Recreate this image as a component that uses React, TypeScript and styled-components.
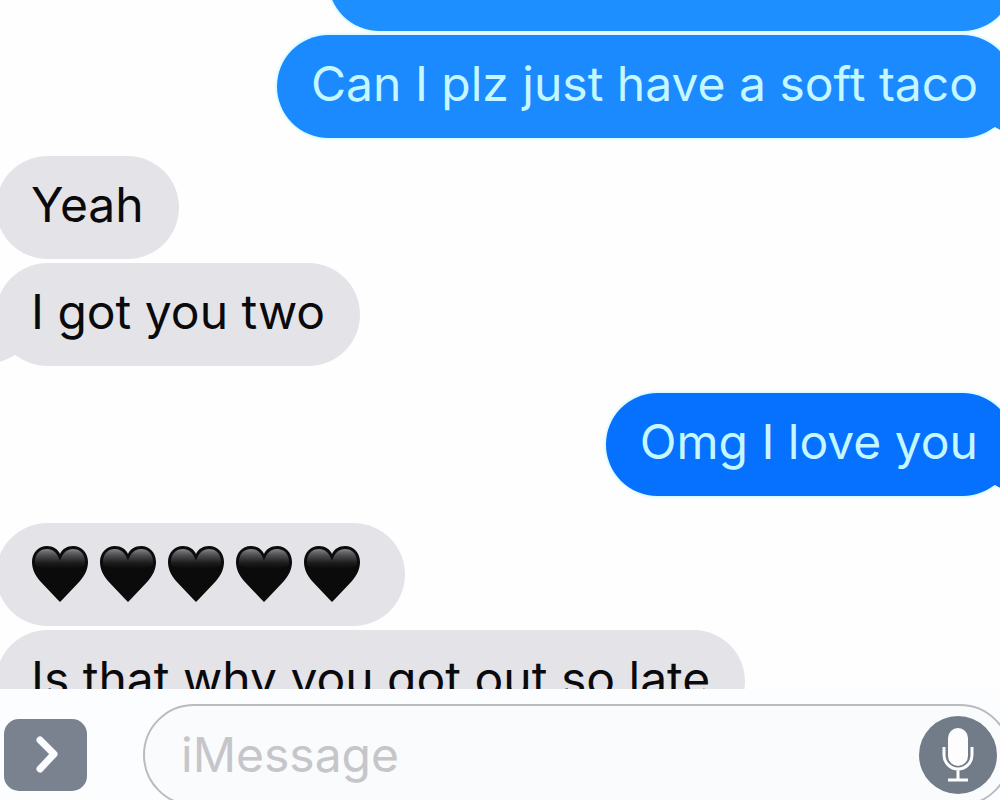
import React from "react";
import styled, { createGlobalStyle, css } from "styled-components";

type Side = "sent" | "received";

const GlobalStyle = createGlobalStyle`
  *, *::before, *::after { box-sizing: border-box; }
  body {
    margin: 0;
    background: #fefefe;
    font-family: Inter, "Liberation Sans", sans-serif;
  }
`;

const Screen = styled.main`
  display: flex;
  flex-direction: column;
  height: 100vh;
  overflow: hidden;
`;

const Thread = styled.section`
  flex: 1;
  min-height: 0;
  overflow: hidden;
`;

const Messages = styled.ol`
  display: flex;
  flex-direction: column;
  gap: 4px;
  list-style: none;
  margin: -72px -14px 0 -4px;
  padding: 0;
`;

const Bubble = styled.li<{ $side: Side; $tone?: string; $gap?: number }>`
  position: relative;
  display: flex;
  align-items: center;
  height: 103px;
  border-radius: 52px;
  font-size: 48px;
  font-weight: 400;
  line-height: 60px;
  white-space: nowrap;
  margin-top: ${(p) => p.$gap ?? 0}px;
  ${(p) =>
    p.$side === "sent"
      ? css`
          align-self: flex-end;
          padding: 0 36px 6px 34px;
          background: ${p.$tone};
          color: #c4f7ff;
          box-shadow: 0 0 3px 1px #c4f7ff;
        `
      : css`
          align-self: flex-start;
          padding: 0 35px 6px 35px;
          background: #e4e3e8;
          color: #0a0a0c;
        `}
`;

const EarlierBubble = styled(Bubble)`
  min-width: 686px;
`;

const TailShape = styled.svg<{ $side: Side }>`
  position: absolute;
  bottom: 0;
  width: 40px;
  height: 40px;
  ${(p) => (p.$side === "sent" ? "right: -8px; transform: scaleX(-1);" : "left: -8px;")}
`;

const Hearts = styled.span`
  display: flex;
  gap: 12px;
  padding: 4px 10px 0 1px;
`;

const HeartShape = styled.svg`
  width: 56px;
  height: 56px;
`;

const Composer = styled.form`
  display: flex;
  flex: none;
  align-items: flex-start;
  gap: 56px;
  height: 111px;
  padding: 15px 0 0 4px;
  margin-right: -11px;
  background: #fcfdfe;
`;

const ExpandButton = styled.button`
  display: grid;
  place-items: center;
  flex: none;
  width: 83px;
  height: 72px;
  margin-top: 15px;
  padding: 0;
  border: 0;
  border-radius: 15px;
  background: #7a818f;
`;

const Field = styled.div`
  display: flex;
  flex: 1;
  align-items: center;
  height: 102px;
  min-width: 0;
  padding: 0 12px 0 36px;
  border: 2px solid #b9bbc0;
  border-radius: 51px;
  background: #fafbfc;
`;

const MessageInput = styled.input`
  flex: 1;
  min-width: 0;
  height: 60px;
  padding: 0;
  border: 0;
  outline: 0;
  background: transparent;
  color: #0a0a0c;
  font: 400 48px/60px Inter, "Liberation Sans", sans-serif;
  &::placeholder {
    color: #c6c6ca;
    opacity: 1;
  }
`;

const MicButton = styled.button`
  flex: none;
  width: 78px;
  height: 78px;
  padding: 0;
  border: 0;
  border-radius: 50%;
  background: #727c89;
`;

function Tail({ side, color }: { side: Side; color: string }) {
  return (
    <TailShape $side={side} viewBox="0 0 40 40" aria-hidden="true">
      <path d="M12 0 C12 18 10 30 0 38 C10 37 19 34 27 29 L40 34 V0 Z" fill={color} />
    </TailShape>
  );
}

function Heart() {
  return (
    <HeartShape viewBox="0 0 56 56" aria-hidden="true">
      <defs>
        <linearGradient id="gloss" x1="0" y1="0" x2="0" y2="1">
          <stop offset="0" stopColor="#858588" />
          <stop offset="0.3" stopColor="#505053" />
          <stop offset="0.7" stopColor="#1c1c1e" />
          <stop offset="1" stopColor="#0b0b0c" />
        </linearGradient>
      </defs>
      <path
        d="M28 56 C27 55 26 54 25 53 L8 35 C3 29 0 23 0 16 C0 7 6 0 15 0 C21 0 26 3 28 8 C30 3 35 0 41 0 C50 0 56 7 56 16 C56 23 53 29 48 35 L31 53 C30 54 29 55 28 56 Z"
        fill="#0b0b0c"
      />
      <path
        d="M3 19 C2 9 7 3 15 3 C22 3 26 8 28 15 C30 8 34 3 41 3 C49 3 54 9 53 19 C49 24 7 24 3 19 Z"
        fill="url(#gloss)"
      />
    </HeartShape>
  );
}

export default function App() {
  return (
    <Screen>
      <GlobalStyle />
      <Thread aria-label="Conversation">
        <Messages>
          <EarlierBubble $side="sent" $tone="#1e8fff" />
          <Bubble $side="sent" $tone="#1c8aff">
            Can I plz just have a soft taco
            <Tail side="sent" color="#1c8aff" />
          </Bubble>
          <Bubble $side="received" $gap={14}>
            Yeah
          </Bubble>
          <Bubble $side="received">
            I got you two
            <Tail side="received" color="#e4e3e8" />
          </Bubble>
          <Bubble $side="sent" $tone="#0670ff" $gap={23}>
            Omg I love you
            <Tail side="sent" color="#0670ff" />
          </Bubble>
          <Bubble $side="received" $gap={23}>
            <Hearts role="img" aria-label="Five black hearts">
              {[0, 1, 2, 3, 4].map((n) => (
                <Heart key={n} />
              ))}
            </Hearts>
          </Bubble>
          <Bubble $side="received">Is that why you got out so late</Bubble>
        </Messages>
      </Thread>
      <Composer onSubmit={(e) => e.preventDefault()}>
        <ExpandButton type="button" aria-label="Show apps">
          <svg width="26" height="40" viewBox="0 0 26 40" fill="none" aria-hidden="true">
            <path
              d="M7 5 L21 19 L7 34"
              stroke="#fafcff"
              strokeWidth="7"
              strokeLinecap="round"
              strokeLinejoin="round"
            />
          </svg>
        </ExpandButton>
        <Field>
          <MessageInput type="text" placeholder="iMessage" aria-label="iMessage" />
          <MicButton type="button" aria-label="Dictate">
            <svg width="78" height="78" viewBox="0 0 78 78" fill="none" aria-hidden="true">
              <rect x="29" y="12" width="20" height="38" rx="10" fill="#fdfdfe" />
              <path
                d="M25 31 V39 A14 14 0 0 0 53 39 V31 M39 53 V64 M29 64 H49"
                stroke="#fdfdfe"
                strokeWidth="3"
              />
            </svg>
          </MicButton>
        </Field>
      </Composer>
    </Screen>
  );
}
